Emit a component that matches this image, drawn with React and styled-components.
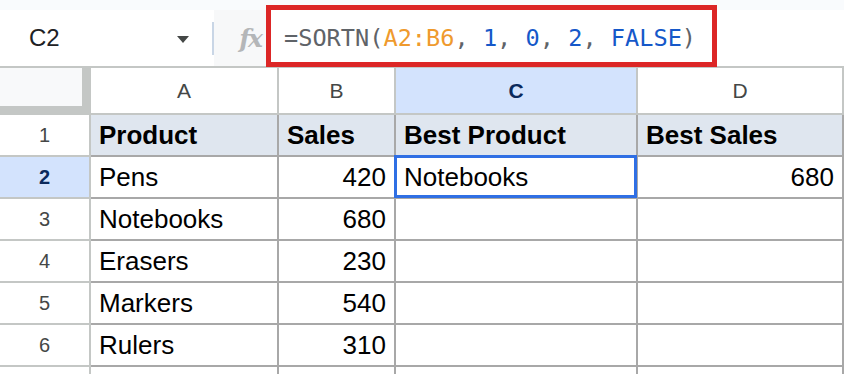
import React from "react";
import styled, { createGlobalStyle } from "styled-components";

const GlobalStyle = createGlobalStyle`
  html, body {
    margin: 0;
    padding: 0;
    background: #f9fbfd;
  }
  body {
    font-family: "Liberation Sans", Arial, sans-serif;
    overflow: hidden;
  }
`;

const Page = styled.div`
  width: 844px;
  height: 374px;
  padding-top: 10px;
  box-sizing: border-box;
  overflow: hidden;
`;

const Toolbar = styled.div`
  display: flex;
  height: 56px;
  background: #fff;
`;

const NameBox = styled.div`
  width: 212px;
  display: flex;
  align-items: center;
  justify-content: space-between;
  padding: 0 23px 0 29px;
  box-sizing: border-box;
  font-size: 24px;
  color: #202124;
`;

const Caret = styled.span`
  width: 0;
  height: 0;
  border-left: 6px solid transparent;
  border-right: 6px solid transparent;
  border-top: 7px solid #444746;
  margin-top: 2px;
`;

const Divider = styled.div`
  width: 2px;
  align-self: center;
  height: 33px;
  background: #c9d6e6;
`;

const FxArea = styled.div`
  width: 52px;
  background: #f7f8f9;
  display: flex;
  align-items: center;
  justify-content: flex-end;
  padding-right: 5px;
  box-sizing: border-box;
  font-family: "DejaVu Serif", "Liberation Serif", serif;
  font-style: italic;
  font-weight: bold;
  font-size: 25px;
  color: #b4b6b8;
  letter-spacing: -2px;
`;

const FormulaField = styled.div`
  flex: 1;
  position: relative;
  display: flex;
  align-items: center;
  padding-left: 18px;
  font-family: "DejaVu Sans Mono", "Liberation Mono", monospace;
  font-size: 23.6px;
  color: #5f6368;
  white-space: pre;
`;

const Highlight = styled.div`
  position: absolute;
  left: 0;
  top: -5px;
  width: 451px;
  height: 62px;
  box-sizing: border-box;
  border: 5px solid #dc2626;
  pointer-events: none;
`;

const Token = styled.span`
  color: ${(p) =>
    p.$kind === "range" ? "#ef9a2d" : p.$kind === "value" ? "#1558c9" : "#5f6368"};
`;

const Grid = styled.div`
  display: grid;
  grid-template-columns: 91px 188px 117px 242px 206px;
  border-top: 2px solid #c4c7c5;
  background: #fff;
`;

const Corner = styled.div`
  height: 47px;
  background: #c4c7c5;
  padding: 0 9px 9px 0;
  box-sizing: border-box;
`;

const CornerInner = styled.div`
  height: 100%;
  background: #f8f9fa;
`;

const ColHead = styled.div`
  height: 47px;
  display: flex;
  align-items: center;
  justify-content: center;
  box-sizing: border-box;
  border-right: 2px solid #c4c7c5;
  border-bottom: 2px solid #c4c7c5;
  font-size: 21px;
  background: ${(p) => (p.$active ? "#d3e3fd" : "#fff")};
  color: ${(p) => (p.$active ? "#0b2a5c" : "#444746")};
  font-weight: ${(p) => (p.$active ? "bold" : "normal")};
`;

const RowHead = styled.div`
  height: ${(p) => p.$h || 42}px;
  display: flex;
  align-items: center;
  justify-content: center;
  box-sizing: border-box;
  border-right: 2px solid #c4c7c5;
  border-bottom: 2px solid #c4c7c5;
  font-size: 20px;
  background: ${(p) => (p.$active ? "#d3e3fd" : "#fff")};
  color: ${(p) => (p.$active ? "#0b2a5c" : "#444746")};
  font-weight: ${(p) => (p.$active ? "bold" : "normal")};
`;

const Cell = styled.div`
  position: relative;
  height: ${(p) => p.$h || 42}px;
  display: flex;
  align-items: center;
  justify-content: ${(p) => (p.$num ? "flex-end" : "flex-start")};
  padding: 1px 8px 0;
  box-sizing: border-box;
  border-right: 2px solid #a8a8a8;
  border-bottom: 2px solid #a8a8a8;
  font-size: 26px;
  color: #000;
  white-space: nowrap;
  background: ${(p) => (p.$head ? "#dfe6ef" : "#fff")};
  font-weight: ${(p) => (p.$head ? "bold" : "normal")};

  ${(p) =>
    p.$selected &&
    `
    &::after {
      content: "";
      position: absolute;
      left: -2px;
      top: -2px;
      right: -1px;
      bottom: -1px;
      border: 3px solid #2f6fe4;
    }
  `}
`;

const columns = ["A", "B", "C", "D"];

const rows = [
  ["Product", "Sales", "Best Product", "Best Sales"],
  ["Pens", "420", "Notebooks", "680"],
  ["Notebooks", "680", "", ""],
  ["Erasers", "230", "", ""],
  ["Markers", "540", "", ""],
  ["Rulers", "310", "", ""],
];

const isNum = (v) => /^\d+$/.test(v);

export default function App() {
  return (
    <Page>
      <GlobalStyle />
      <Toolbar>
        <NameBox>
          C2
          <Caret />
        </NameBox>
        <Divider />
        <FxArea>fx</FxArea>
        <FormulaField>
          <Highlight />
          <Token>=SORTN(</Token>
          <Token $kind="range">A2:B6</Token>
          <Token>, </Token>
          <Token $kind="value">1</Token>
          <Token>, </Token>
          <Token $kind="value">0</Token>
          <Token>, </Token>
          <Token $kind="value">2</Token>
          <Token>, </Token>
          <Token $kind="value">FALSE</Token>
          <Token>)</Token>
        </FormulaField>
      </Toolbar>
      <Grid>
        <Corner>
          <CornerInner />
        </Corner>
        {columns.map((c) => (
          <ColHead key={c} $active={c === "C"}>
            {c}
          </ColHead>
        ))}
        {rows.map((row, r) => (
          <React.Fragment key={r}>
            <RowHead $active={r === 1}>{r + 1}</RowHead>
            {row.map((v, c) => (
              <Cell
                key={c}
                $head={r === 0}
                $num={isNum(v)}
                $selected={r === 1 && c === 2}
              >
                {v}
              </Cell>
            ))}
          </React.Fragment>
        ))}
        <RowHead $h={20} />
        {columns.map((c) => (
          <Cell key={c} $h={20} />
        ))}
      </Grid>
    </Page>
  );
}
